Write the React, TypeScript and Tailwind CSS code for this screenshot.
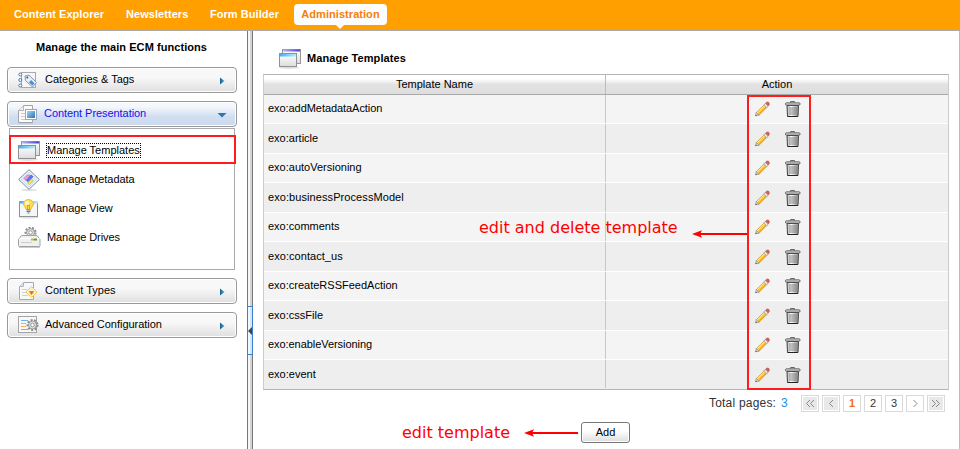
import React from 'react';

const templates = [
  { name: 'exo:addMetadataAction', spacing: 'tracking-[-0.06px]' },
  { name: 'exo:article', spacing: '' },
  { name: 'exo:autoVersioning', spacing: '' },
  { name: 'exo:businessProcessModel', spacing: 'tracking-[0.08px]' },
  { name: 'exo:comments', spacing: '' },
  { name: 'exo:contact_us', spacing: 'tracking-[0.05px]' },
  { name: 'exo:createRSSFeedAction', spacing: '' },
  { name: 'exo:cssFile', spacing: '' },
  { name: 'exo:enableVersioning', spacing: 'tracking-[-0.06px]' },
  { name: 'exo:event', spacing: '' },
];

function Gradients() {
  return (
    <svg className="absolute h-0 w-0" aria-hidden="true">
      <defs>
        <linearGradient id="win" x1="0" y1="0" x2="0" y2="1"><stop offset="0" stopColor="#fff" /><stop offset="1" stopColor="#dcdcde" /></linearGradient>
        <linearGradient id="barPurple"><stop offset="0" stopColor="#b9b4f4" /><stop offset="1" stopColor="#4a3fd0" /></linearGradient>
        <linearGradient id="barBlue"><stop offset="0" stopColor="#4aaef0" /><stop offset="1" stopColor="#b0f0fb" /></linearGradient>
        <linearGradient id="blue" x1="0" y1="0" x2="1" y2="1"><stop offset="0" stopColor="#a5d6f5" /><stop offset="1" stopColor="#2b72b5" /></linearGradient>
        <linearGradient id="can"><stop offset="0" stopColor="#aaa" /><stop offset=".35" stopColor="#fff" /><stop offset="1" stopColor="#8c8c8c" /></linearGradient>
        <linearGradient id="arrow"><stop offset="0" stopColor="#1a5e86" /><stop offset="1" stopColor="#48aede" /></linearGradient>
      </defs>
    </svg>
  );
}

function WindowsIcon() {
  return (
    <svg width="24" height="22" viewBox="0 0 24 22" className="block shrink-0">
      <ellipse cx="11" cy="19.700" rx="10" ry="1.200" fill="#e0e0e0" />
      <rect x="4.500" y="1.500" width="18" height="14" fill="url(#win)" stroke="#96969c" />
      <rect x="5" y="1.500" width="17" height="2" fill="url(#barPurple)" />
      <rect x="1.500" y="5.500" width="17" height="13" fill="url(#win)" stroke="#909096" />
      <rect x="2" y="6" width="16" height="2.500" fill="url(#barBlue)" />
    </svg>
  );
}

function MetadataIcon() {
  return (
    <svg width="24" height="22" viewBox="0 0 24 22" className="block shrink-0">
      <ellipse cx="12" cy="21" rx="8" ry="1" fill="#e0e0e0" />
      <path d="M12 .7 22.300 10.500 12 20.300 1.700 10.500Z" fill="#fbfdff" stroke="#6b87a4" />
      <path d="M12 3 20 10.500 12 18 4 10.500Z" fill="#e3eefa" stroke="#b9cee4" strokeWidth=".7" />
      <path d="M7 9.500 10.500 6l3 .3L9 11.500Z" fill="#f39ada" stroke="#c558ae" strokeWidth=".7" />
      <path d="m9.500 11.500 4.700-5.300 1.800 1.500-4.800 5Z" fill="#5a80f0" stroke="#3156c5" strokeWidth=".7" />
      <path d="m10.500 14 4-4 1.800 1.500-3.800 4Z" fill="#fbe66c" stroke="#cda630" strokeWidth=".7" />
    </svg>
  );
}

function ViewIcon() {
  return (
    <svg width="24" height="22" viewBox="0 0 24 22" className="block shrink-0">
      <ellipse cx="11.500" cy="19.500" rx="10" ry="1" fill="#e0e0e0" />
      <rect x="2.500" y="4.500" width="18" height="14" fill="#f5f6f8" stroke="#8b9299" />
      <rect x="2" y="3" width="19" height="2.600" fill="url(#barBlue)" />
      <path d="M11.500 1.500C8.300 1.500 6.500 3.700 6.500 6c0 2.500 2.500 3.200 2.700 5.500h4.600c.2-2.300 2.700-3 2.700-5.500C16.500 3.700 14.700 1.500 11.500 1.500Z" fill="#ffdc50" stroke="#e8bb48" />
      <ellipse cx="10" cy="5" rx="2" ry="2.200" fill="#fff8ce" />
      <path d="M10.500 11V7l1 1 1-1v4" fill="none" stroke="#cc8d19" strokeWidth=".7" />
      <path d="M9.500 12h4M9.500 13.500h4M10.500 15h2" stroke="#777" />
    </svg>
  );
}

function Gear({ x, y, r }: { x: number; y: number; r: number }) {
  return (
    <g transform={`translate(${x} ${y})`}>
      <circle r={r} fill="none" stroke="#8c8c8c" strokeWidth="2" strokeDasharray="2 1.500" />
      <circle r={r - 1} fill="#dedede" stroke="#888" strokeWidth=".8" />
      <circle r={r / 2.8} fill="#fff" stroke="#888" strokeWidth=".8" />
    </g>
  );
}

function DrivesIcon() {
  return (
    <svg width="24" height="22" viewBox="0 0 24 22" className="block shrink-0">
      <Gear x={13.500} y={5.500} r={5} />
      <path d="M4.500 8.500H20l3 4v6q0 1-1 1H2.500q-1 0-1-1v-6Z" fill="#f0f0f0" stroke="#a0a0a0" />
      <path d="M2.500 11.500h20" stroke="#fff" />
      <path d="M4 15.500h11" stroke="#ccc" />
      <rect x="14" y="11.500" width="3" height="2" fill="#f2a323" />
      <rect x="17" y="11.500" width="3" height="2" fill="#3aab38" />
      <path d="M2 20.500h21" stroke="#ccc" />
    </svg>
  );
}

function TagsIcon() {
  return (
    <svg width="20" height="18" viewBox="0 0 20 18" className="block shrink-0">
      <rect x="3.500" y="1.500" width="14" height="15" fill="#f6f6f6" stroke="#aaa" />
      <g fill="#fff" stroke="#477bab"><circle cx="2.300" cy="3.500" r="1.500" /><circle cx="2.300" cy="9" r="1.500" /><circle cx="2.300" cy="14.500" r="1.500" /></g>
      <path d="m7 5 4-.8 7.500 7.300-4 4.500L7.500 9.500Z" fill="#e8f1fa" stroke="#8097b0" />
      <path d="m13 9 3.500 3.300-2 2.200L11 11.500Z" fill="#4a8fd0" />
      <circle cx="9.300" cy="6.500" r="1" fill="#456" />
    </svg>
  );
}

function PresentationIcon() {
  return (
    <svg width="20" height="19" viewBox="0 0 20 19" className="block shrink-0">
      <path d="M5.500.5h9v17h-14V5.500Z" fill="#fafafa" stroke="#a4a4a4" />
      <path d="M5.500.5v5h-5" fill="#eee" stroke="#b4b4b4" />
      <path d="M3 8.500h4M3 11.500h4M3 14.500h4" stroke="#ccc" />
      <rect x="7.500" y="4.500" width="11" height="10" fill="#fff" stroke="#9aa9b9" />
      <rect x="9" y="6" width="8" height="7" fill="url(#blue)" />
      <path d="M1 18.500h14" stroke="#ccc" />
    </svg>
  );
}

function TypesIcon() {
  return (
    <svg width="20" height="19" viewBox="0 0 20 19" className="block shrink-0">
      <path d="M5.500.5h10v17h-14v-13Z" fill="#f8f8f8" stroke="#a8a8a8" />
      <path d="M5.500.5v4h-4" fill="#dce7f5" stroke="#aab9ca" />
      <path d="M4 7.500h5M4 10.500h4M4 13.500h6" stroke="#d0d0d0" />
      <path d="m13.500 4.500 5.500 5.500-5.500 5.500L8 10Z" fill="#fff7ae" stroke="#e8c95a" />
      <path d="M11 9.500h5L13.500 13Z" fill="#db573d" />
      <circle cx="13.500" cy="9.500" r="2" fill="#e8704c" />
      <path d="M11.300 9 13.500 7l2.200 2Z" fill="#fff" />
    </svg>
  );
}

function ConfigIcon() {
  return (
    <svg width="21" height="18" viewBox="0 0 21 18" className="block shrink-0">
      <rect x=".5" y=".5" width="18" height="16" fill="#f8f8f8" stroke="#a5a5a5" />
      <path d="M3 4.500h7M3 13.500h7" stroke="#6ab6e6" />
      <path d="M3 7.500h5M3 10.500h5" stroke="#f0b050" />
      <Gear x={14.500} y={9} r={5} />
    </svg>
  );
}

function PencilIcon() {
  return (
    <svg width="15" height="16" viewBox="0 0 15 16" className="block">
      <path d="m1.200 11.700 8.600-8.500 2.700 2.600-8.600 8.600Z" fill="#ffc832" stroke="#b98b3a" strokeWidth=".6" />
      <path d="m2.200 11.900 8-7.900" stroke="#fff0a8" strokeWidth=".9" />
      <path d="m3.600 13.700 8.200-8.100" stroke="#e9961c" strokeWidth=".9" />
      <path d="m.6 14.800.6-3.300 2.800 2.700Z" fill="#ddd3cb" stroke="#8c8c8c" strokeWidth=".6" />
      <path d="m.4 15.100.4-1.600 1.300 1.200Z" fill="#555" />
      <path d="m8.800 4 1.700-1.700 2.800 2.700-1.700 1.700Z" fill="#e6e6e6" stroke="#909090" strokeWidth=".6" />
      <path d="m10.700 2.200 1.200-1.200q2.600-.4 2.400 2.400l-1.100 1.400Z" fill="#d9655f" stroke="#b04a4a" strokeWidth=".7" />
    </svg>
  );
}

function TrashIcon() {
  return (
    <svg width="16" height="17" viewBox="0 0 16 17" className="block">
      <path d="M5.500 1.500V.5h4v1" fill="none" stroke="#666" />
      <path d="M2 4.500h11.500L13 15.500H2.500Z" fill="url(#can)" stroke="#444" />
      <path d="M5 6v8M7 6v8M9 6v8M11 6v8" stroke="#777" strokeWidth=".9" />
      <rect x=".5" y="1.900" width="14.500" height="2.200" rx=".9" fill="#e4e4e4" stroke="#555" />
      <path d="M2.800 15.500h10" stroke="#222" />
    </svg>
  );
}

function MenuButton({ icon, label, open = false }: { icon: React.ReactNode; label: string; open?: boolean }) {
  return (
    <div className={`flex h-[26px] w-[230px] shrink-0 items-center rounded-[4px] border border-[#999] pl-[10px] pr-[11px] shadow-[inset_0_0_0_1px_#fff] ${open ? 'bg-linear-to-b from-[#f4f7fc] from-20% via-[#d2dff1] via-60% to-[#cbdaef]' : 'bg-linear-to-b from-[#f8f8f8] from-40% to-[#dfdfdf]'}`}>
      <div className="w-[27px]">{icon}</div>
      <span className={`mb-[2px] flex-1 whitespace-nowrap ${open ? 'ml-[-1px] tracking-[-0.06px] text-[#1212ee]' : 'tracking-[-0.02px]'}`}>{label}</span>
      {open
        ? <svg width="10" height="6" className="ml-auto mr-[-2px] mt-[2px]"><path d="M.5 1h9L5 5.500Z" fill="#287ba8" /></svg>
        : <svg width="6" height="8" className="mt-[1px]"><path d="M1 .5v7L5.500 4Z" fill="url(#arrow)" /></svg>}
    </div>
  );
}

function SubItem({ icon, label, focused = false }: { icon: React.ReactNode; label: string; focused?: boolean }) {
  return (
    <div className="flex h-[29px] items-center pl-[7px]">
      {icon}
      <span className={`ml-[5px] h-[15px] whitespace-nowrap border border-dotted leading-[13px] ${focused ? 'border-black' : 'border-transparent tracking-[-0.08px]'}`}>{label}</span>
    </div>
  );
}

function PageBox({ children, dim = false }: { children: React.ReactNode; dim?: boolean }) {
  return <div className={`flex h-[17px] w-[18px] items-center justify-center border border-[#d9d9d9] text-[11px] text-[#333] ${dim ? 'bg-[#e8e8e8] shadow-[inset_0_0_0_1px_#fff]' : 'bg-white'}`}>{children}</div>;
}

function Chevron({ d }: { d: string }) {
  return <svg width="10" height="9" viewBox="0 0 10 9" fill="none" stroke="#888"><path d={d} /></svg>;
}

function LeftArrow({ width }: { width: number }) {
  return (
    <svg width={width} height="8" viewBox={`0 0 ${width} 8`} className="block">
      <path d={`M6 4H${width}`} stroke="#f00" strokeWidth="2" />
      <path d="M0 4 10 .3 8 4l2 3.700Z" fill="#f00" />
    </svg>
  );
}

export default function App() {
  return (
    <div className="relative flex h-[449px] w-[960px] flex-col overflow-hidden bg-white font-['Liberation_Sans',Arial,sans-serif] text-[11px] leading-[13px] text-black">
      <Gradients />
      <nav className="flex h-[31px] shrink-0 items-start border-b border-[#aaa] bg-[#ffa000] pl-[14px] pt-[4px] font-bold leading-[21px] tracking-[0.05px] text-white">
        <span className="w-[112px]">Content Explorer</span>
        <span className="w-[84px]">Newsletters</span>
        <span className="w-[84px]">Form Builder</span>
        <div className="relative h-[21px] w-[93px] rounded-[4px] bg-[#fdfdfd] text-center text-[#f57f0a]">
          Administration
          <svg width="8" height="4" className="absolute left-[42px] top-[21px]"><path d="M0 0h8L4 4Z" fill="#fdfdfd" /></svg>
        </div>
      </nav>
      <div className="flex min-h-0 flex-1">
        <aside className="flex w-[247px] shrink-0 flex-col pl-[7px]">
          <h2 className="mb-[20px] mt-[10px] w-[229px] text-center font-bold tracking-[0.06px]">Manage the main ECM functions</h2>
          <div className="mt-[-7px] flex flex-col">
            <MenuButton icon={<TagsIcon />} label="Categories & Tags" />
            <div className="mt-[8px]"><MenuButton icon={<PresentationIcon />} label="Content Presentation" open /></div>
          </div>
          <div className="ml-[2px] mt-[1px] h-[142px] w-[226px] shrink-0 border border-[#aaa] pt-[7px]">
            <SubItem icon={<WindowsIcon />} label="Manage Templates" focused />
            <SubItem icon={<MetadataIcon />} label="Manage Metadata" />
            <SubItem icon={<ViewIcon />} label="Manage View" />
            <SubItem icon={<DrivesIcon />} label="Manage Drives" />
          </div>
          <div className="mt-[8px] flex flex-col gap-[8px]">
            <MenuButton icon={<TypesIcon />} label="Content Types" />
            <MenuButton icon={<ConfigIcon />} label="Advanced Configuration" />
          </div>
        </aside>
        <div className="flex w-[6px] shrink-0 flex-col border-x border-[#777] bg-linear-to-r from-[#f6f6f6] from-50% to-[#d4d4d4] to-50% pt-[275px]">
          <div className="mx-[-1px] flex h-[49px] items-center border border-[#3b7fd0] bg-linear-to-r from-[#f2f8fe] from-50% to-[#d2e6fa] to-50%">
            <svg width="4" height="8"><path d="M4 0v8L0 4Z" fill="#444" /></svg>
          </div>
        </div>
        <main className="flex min-w-0 flex-1 flex-col border-r border-[#bbb] pl-[10px]">
          <div className="flex h-[43px] items-center pl-[15px] pt-[12px]">
            <WindowsIcon />
            <h1 className="ml-[5px] font-bold tracking-[0.08px]">Manage Templates</h1>
          </div>
          <div className="w-[686px] shrink-0 border border-[#b5b5b5] border-r-[#ccc] border-l-[#ccc]">
            <div className="flex h-[20px] border-b border-[#aaa] bg-linear-to-b from-white from-20% via-[#e2e2e2] via-50% to-[#dedede] text-center leading-[19px]">
              <div className="w-[342px] border-r border-[#bbb]">Template Name</div>
              <div className="flex-1">Action</div>
            </div>
            {templates.map(({ name, spacing }, i) => (
              <div key={name} className={`flex items-stretch border-b border-white last:h-[29px] last:border-[#eee] ${i % 2 ? 'h-[30px] bg-[#eee]' : 'h-[29px] bg-[#f4f4f4]'}`}>
                <div className={`w-[342px] border-r border-[#c8c8c8] pl-[4px] ${i % 2 ? 'pt-[8px]' : 'pt-[7px]'} ${spacing}`}>{name}</div>
                <div className={`flex flex-1 items-start justify-center gap-[15px] pl-[1px] ${i % 2 ? 'pt-[7px]' : 'pt-[6px]'}`}><PencilIcon /><TrashIcon /></div>
              </div>
            ))}
          </div>
          <div className="mt-[5px] flex items-center pl-[446px] text-[12px] text-[#333]">
            <span className="w-[72px] whitespace-nowrap tracking-[0.2px]">Total pages:</span>
            <span className="w-[20px] text-[#1b90ea]">3</span>
            <div className="flex gap-[3px]">
              <PageBox dim><Chevron d="M5 1 1.500 4.500 5 8M9 1 5.500 4.500 9 8" /></PageBox>
              <PageBox dim><Chevron d="M7 1 3.500 4.500 7 8" /></PageBox>
              <PageBox><b className="text-[#f26b16]">1</b></PageBox>
              <PageBox>2</PageBox>
              <PageBox>3</PageBox>
              <PageBox><Chevron d="m3.500 1 3.500 3.500L3.500 8" /></PageBox>
              <PageBox dim><Chevron d="m1 1 3.500 3.500L1 8M5 1l3.500 3.500L5 8" /></PageBox>
            </div>
          </div>
          <div className="mt-[10px] flex h-[21px] items-center pl-[139px]">
            <span className="w-[122px] whitespace-nowrap font-['DejaVu_Sans',sans-serif] text-[16px] leading-[20px] text-[#f00]">edit template</span>
            <LeftArrow width={54} />
            <button className="ml-[3px] h-[21px] w-[49px] rounded-[3px] border border-[#777] bg-linear-to-b from-white from-40% to-[#ddd] pb-[1px] leading-[18px] shadow-[inset_0_0_0_1px_#fff]">Add</button>
          </div>
        </main>
      </div>
      <div className="absolute left-[9px] top-[135px] h-[29px] w-[227px] border-2 border-[#ff1c1c]" />
      <div className="absolute left-[747px] top-[95px] h-[295px] w-[64px] border-2 border-[#ff1c1c]" />
      <div className="absolute left-[479px] top-[218px] flex items-center font-['DejaVu_Sans',sans-serif] text-[16px] leading-[20px] text-[#f00]">
        <span className="w-[213px] whitespace-nowrap">edit and delete template</span>
        <span className="mt-[11px]"><LeftArrow width={55} /></span>
      </div>
    </div>
  );
}
